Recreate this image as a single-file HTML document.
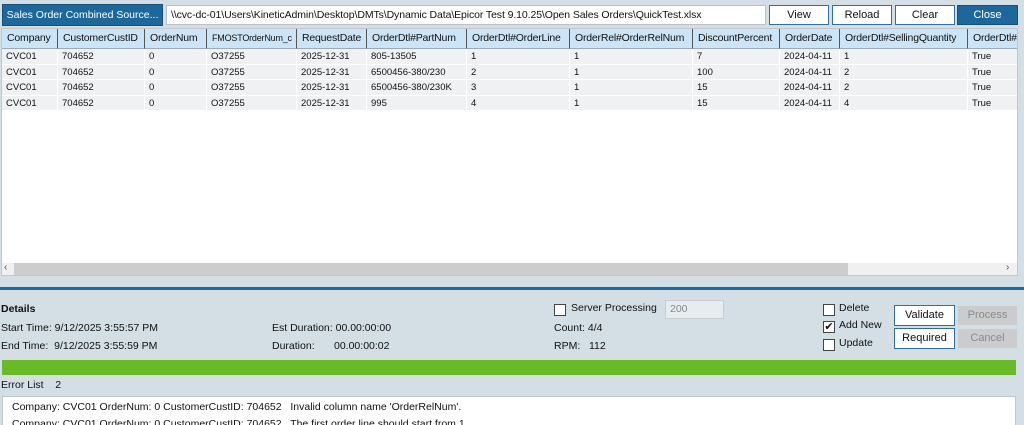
<!DOCTYPE html>
<html><head><meta charset="utf-8"><style>
*{box-sizing:border-box;margin:0;padding:0}
html,body{width:1024px;height:425px;overflow:hidden}
body{background:#d3dfe4;font-family:"Liberation Sans",sans-serif;font-size:10.5px;color:#111;position:relative}
.a{position:absolute}
.btn{position:absolute;background:#fff;border:1px solid #2f6e9e;text-align:center;font-size:11px;line-height:18px;white-space:nowrap}
.grid{position:absolute;left:1px;top:28px;width:1017px;height:248px;background:#fff;border:1px solid #c0c8cc;overflow:hidden}
.hd{position:absolute;top:0;height:20px;background:#cce5f6;border-right:1px solid #555;border-bottom:1px solid #9ab;line-height:19px;font-size:10.5px;letter-spacing:-0.2px;padding-left:5px;white-space:nowrap;overflow:hidden}
.c{position:absolute;height:15.5px;background:#eff1f3;border-right:1px solid #fff;border-bottom:1px solid #fff;line-height:15px;font-size:9.5px;padding-left:4px;white-space:nowrap;overflow:hidden}
.cb{position:absolute;width:12px;height:12px;background:#fff;border:1px solid #444}
.lbl{position:absolute;font-size:10.5px;white-space:nowrap}
</style></head><body>
<div class="a" style="left:2px;top:4px;width:161px;height:22px;background:#1c679c;color:#fff;font-size:10.5px;line-height:20px;text-align:center;border:1px solid #15507a;white-space:nowrap">Sales Order Combined Source...</div>
<div class="a" style="left:166px;top:5px;width:600px;height:20px;background:#fff;border:1px solid #b8c2c8;font-size:10.5px;line-height:18px;padding-left:4px;white-space:nowrap;overflow:hidden;letter-spacing:-0.1px">\\cvc-dc-01\Users\KineticAdmin\Desktop\DMTs\Dynamic Data\Epicor Test 9.10.25\Open Sales Orders\QuickTest.xlsx</div>
<div class="btn" style="left:769px;top:5px;width:60px;height:20px">View</div>
<div class="btn" style="left:832px;top:5px;width:60px;height:20px">Reload</div>
<div class="btn" style="left:895px;top:5px;width:60px;height:20px">Clear</div>
<div class="btn" style="left:957px;top:5px;width:61px;height:20px;background:#1c679c;color:#fff;border-color:#15507a">Close</div>
<div class="grid" id="g"></div>
<div class="a" style="left:0;top:287px;width:1024px;height:3px;background:#1a6aa5"></div>
<div class="lbl" style="left:1px;top:303px;font-weight:bold">Details</div>
<div class="lbl" style="left:1px;top:322px">Start Time: 9/12/2025 3:55:57 PM</div>
<div class="lbl" style="left:1px;top:340px">End Time:&nbsp; 9/12/2025 3:55:59 PM</div>
<div class="lbl" style="left:272px;top:322px">Est Duration: 00.00:00:00</div>
<div class="lbl" style="left:272px;top:340px">Duration:<span style="position:absolute;left:62px">00.00:00:02</span></div>
<div class="cb" style="left:554px;top:304px"></div>
<div class="lbl" style="left:571px;top:302px">Server Processing</div>
<div class="a" style="left:665px;top:300px;width:59px;height:19px;background:#e6ecef;border:1px solid #c6ced2;color:#888;font-size:10.5px;line-height:17px;padding-left:4px">200</div>
<div class="lbl" style="left:554px;top:322px">Count: 4/4</div>
<div class="lbl" style="left:554px;top:340px">RPM:&nbsp;&nbsp; 112</div>
<div class="cb" style="left:823px;top:304px"></div><div class="lbl" style="left:839px;top:302px">Delete</div>
<div class="cb" style="left:823px;top:321px;font-size:11px;line-height:10px;text-align:center">✔</div><div class="lbl" style="left:839px;top:319px">Add New</div>
<div class="cb" style="left:823px;top:339px"></div><div class="lbl" style="left:839px;top:337px">Update</div>
<div class="btn" style="left:894px;top:305px;width:61px;height:21px;line-height:19px">Validate</div>
<div class="btn" style="left:894px;top:328px;width:61px;height:21px;line-height:19px">Required</div>
<div class="btn" style="left:958px;top:306px;width:59px;height:19px;background:#cacccd;border:none;color:#8a8a8a">Process</div>
<div class="btn" style="left:958px;top:329px;width:59px;height:19px;background:#cacccd;border:none;color:#8a8a8a">Cancel</div>
<div class="a" style="left:2px;top:360px;width:1014px;height:15px;background:#66bb26"></div>
<div class="lbl" style="left:1px;top:379px">Error List&nbsp;&nbsp;&nbsp; 2</div>
<div class="a" style="left:2px;top:396px;width:1014px;height:29px;background:#fff;border:1px solid #c0c8cc;border-bottom:none;overflow:hidden">
<div class="lbl" style="left:9px;top:4px">Company: CVC01 OrderNum: 0 CustomerCustID: 704652&nbsp;&nbsp; Invalid column name 'OrderRelNum'.</div>
<div class="lbl" style="left:9px;top:21px">Company: CVC01 OrderNum: 0 CustomerCustID: 704652&nbsp;&nbsp; The first order line should start from 1.</div>
</div>
<script>
var cols=[[0,56,"Company"],[56,143,"CustomerCustID"],[143,205,"OrderNum"],[205,295,"FMOSTOrderNum_c"],[295,365,"RequestDate"],[365,465,"OrderDtl#PartNum"],[465,568,"OrderDtl#OrderLine"],[568,691,"OrderRel#OrderRelNum"],[691,778,"DiscountPercent"],[778,838,"OrderDate"],[838,966,"OrderDtl#SellingQuantity"],[966,1030,"OrderDtl#"]];
var rows=[["CVC01","704652","0","O37255","2025-12-31","805-13505","1","1","7","2024-04-11","1","True"],
["CVC01","704652","0","O37255","2025-12-31","6500456-380/230","2","1","100","2024-04-11","2","True"],
["CVC01","704652","0","O37255","2025-12-31","6500456-380/230K","3","1","15","2024-04-11","2","True"],
["CVC01","704652","0","O37255","2025-12-31","995","4","1","15","2024-04-11","4","True"]];
var h="";
cols.forEach(function(c,i){h+='<div class="hd" style="left:'+c[0]+'px;width:'+(c[1]-c[0])+'px'+(i==3?';font-size:9px':'')+'">'+c[2]+'</div>';
rows.forEach(function(r,j){h+='<div class="c" style="top:'+(20+j*15.5)+'px;left:'+c[0]+'px;width:'+(c[1]-c[0])+'px">'+r[i]+'</div>';});});
h+='<div style="position:absolute;left:0;top:234px;width:1017px;height:13px;background:#f0f0f0"></div>';
h+='<div style="position:absolute;left:12px;top:234px;width:834px;height:13px;background:#cdcdcd"></div>';
h+='<div style="position:absolute;left:2px;top:233px;font-size:10px;color:#555">‹</div>';
h+='<div style="position:absolute;left:1004px;top:233px;font-size:10px;color:#555">›</div>';
document.getElementById("g").innerHTML=h;
</script>
</body></html>
